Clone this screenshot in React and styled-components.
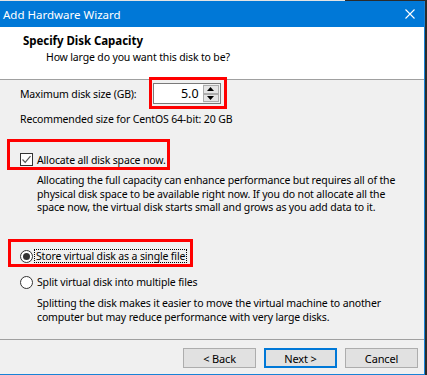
import React from 'react';
import styled, { createGlobalStyle } from 'styled-components';

const GlobalStyle = createGlobalStyle`
  html, body {
    margin: 0;
    padding: 0;
    background: #2b2b2b;
  }
  body {
    font-family: "Noto Sans", "Open Sans", "DejaVu Sans", sans-serif;
    font-size: 10.5px;
    letter-spacing: -0.15px;
    color: #000;
    white-space: nowrap;
  }
`;

const Screen = styled.div`
  width: 427px;
  height: 375px;
  display: flex;
  flex-direction: column;
  background: #2b2b2b;
  overflow: hidden;
`;

const TopStrip = styled.div`
  height: 1px;
  flex: none;
  background: linear-gradient(to right, #e3e3e3 0, #e3e3e3 345px, #2b2b2b 345px);
`;

const Window = styled.div`
  width: 424px;
  height: 373px;
  flex: none;
  display: flex;
  flex-direction: column;
  border-right: 1px solid #1883d7;
  border-bottom: 1px solid #1883d7;
  background: #f0f0f0;
`;

const TitleBar = styled.div`
  height: 26px;
  flex: none;
  display: flex;
  align-items: center;
  justify-content: space-between;
  background: #0078d7;
  color: #fff;
  padding: 0 9px 0 3px;
  font-size: 11.5px;
  letter-spacing: 0;
`;

const Header = styled.div`
  height: 53px;
  flex: none;
  background: #fff;
  border-bottom: 1px solid #a0a0a0;
  padding: 6px 0 0 23px;
  box-sizing: border-box;
`;

const HeaderTitle = styled.div`
  font-weight: 700;
  font-size: 11.5px;
  letter-spacing: -0.05px;
  line-height: 16px;
`;

const HeaderSub = styled.div`
  margin-left: 23px;
  line-height: 16px;
`;

const Body = styled.div`
  flex: 1;
  min-height: 0;
  display: flex;
  flex-direction: column;
  padding-left: 20px;
  padding-right: 8px;
`;

const SizeRow = styled.div`
  display: flex;
  align-items: center;
  margin-top: -3px;
  height: 32px;
`;

const Mark = styled.div`
  border: 3px solid #ff0000;
  box-sizing: border-box;
  display: flex;
  align-items: ${p => p.$align || 'center'};
`;

const SpinBox = styled.div`
  display: flex;
  border: 1px solid #7a7a7a;
  height: 21px;
  box-sizing: border-box;
  background: #fff;
`;

const SpinInput = styled.div`
  width: 49px;
  text-align: right;
  padding-right: 4px;
  box-sizing: border-box;
  line-height: 19px;
  font-size: 12.5px;
  letter-spacing: 0;
`;

const SpinButtons = styled.div`
  width: 17px;
  display: flex;
  flex-direction: column;
  background: #f0f0f0;
  padding: 1px 1px 1px 0;
  box-sizing: border-box;
`;

const SpinButton = styled.div`
  flex: 1;
  display: flex;
  align-items: center;
  justify-content: center;
  background: #e5e5e5;
  border: 1px solid #acacac;
`;

const Text = styled.div`
  line-height: ${p => p.$lh || 15}px;
  margin-top: ${p => p.$mt || 0}px;
  margin-left: ${p => p.$ml || 0}px;
`;

const Option = styled.label`
  display: flex;
  align-items: center;
  gap: 4px;
  height: 15px;
`;

const CheckBox = styled.span`
  width: 13px;
  height: 13px;
  box-sizing: border-box;
  border: 1px solid #333;
  background: #fff;
  display: flex;
  align-items: center;
  justify-content: center;
`;

const Radio = styled.span`
  width: 13px;
  height: 13px;
  box-sizing: border-box;
  border: 1px solid #333;
  border-radius: 50%;
  background: #fff;
  display: flex;
  align-items: center;
  justify-content: center;
  &::after {
    content: '';
    display: ${p => (p.$on ? 'block' : 'none')};
    width: 7px;
    height: 7px;
    border-radius: 50%;
    background: #333;
  }
`;

const Focus = styled.span`
  outline: 1px dotted #000;
  outline-offset: 0;
  margin-left: -2px;
  padding: 0 1px;
  line-height: 12px;
`;

const Footer = styled.div`
  height: 35px;
  flex: none;
  border-top: 1px solid #a0a0a0;
  display: flex;
  justify-content: flex-end;
  align-items: flex-start;
  gap: 8px;
  padding: 8px 6px 0 0;
  box-sizing: border-box;
`;

const Button = styled.div`
  width: 73px;
  height: 20px;
  box-sizing: border-box;
  background: #e1e1e1;
  border: ${p => (p.$default ? '2px solid #0078d7' : '1px solid #adadad')};
  display: flex;
  align-items: center;
  justify-content: center;
  font-size: 11px;
`;

const Arrow = ({ up }) => (
  <svg width="7" height="4" viewBox="0 0 7 4">
    <path d={up ? 'M0 4 L3.5 0 L7 4 Z' : 'M0 0 L3.5 4 L7 0 Z'} fill="#000" />
  </svg>
);

export default function App() {
  return (
    <Screen>
      <GlobalStyle />
      <TopStrip />
      <Window>
        <TitleBar>
          <span>Add Hardware Wizard</span>
          <svg width="10" height="10" viewBox="0 0 10 10">
            <path d="M0.5 0.5 L9.5 9.5 M9.5 0.5 L0.5 9.5" stroke="#fff" strokeWidth="1.1" />
          </svg>
        </TitleBar>
        <Header>
          <HeaderTitle>Specify Disk Capacity</HeaderTitle>
          <HeaderSub>How large do you want this disk to be?</HeaderSub>
        </Header>
        <Body>
          <SizeRow>
            <span style={{ paddingTop: 2 }}>Maximum disk size (GB):</span>
            <Mark style={{ marginLeft: 12, width: 78, height: 32, padding: '1px 0 0 1px', alignItems: 'center' }}>
              <SpinBox>
                <SpinInput>5.0</SpinInput>
                <SpinButtons>
                  <SpinButton><Arrow up /></SpinButton>
                  <SpinButton><Arrow /></SpinButton>
                </SpinButtons>
              </SpinBox>
            </Mark>
          </SizeRow>
          <Text $mt={3}>Recommended size for CentOS 64-bit: 20 GB</Text>
          <Mark $align="flex-end" style={{ marginLeft: -13, marginTop: 12, width: 163, height: 31, padding: '0 0 0 10px' }}>
            <Option>
              <CheckBox>
                <svg width="11" height="11" viewBox="0 0 11 11">
                  <path d="M1.5 5.5 L4.2 8.3 L9.5 2.2" fill="none" stroke="#555" strokeWidth="1.2" />
                </svg>
              </CheckBox>
              <span>Allocate all disk space now.</span>
            </Option>
          </Mark>
          <Text $lh={13.5} $ml={17} $mt={4}>
            Allocating the full capacity can enhance performance but requires all of the<br />
            physical disk space to be available right now. If you do not allocate all the<br />
            space now, the virtual disk starts small and grows as you add data to it.
          </Text>
          <Mark $align="flex-end" style={{ marginLeft: -12, marginTop: 24, width: 185, height: 28, padding: '0 0 0 9px' }}>
            <Option>
              <Radio $on />
              <Focus>Store virtual disk as a single file</Focus>
            </Option>
          </Mark>
          <Option style={{ marginTop: 8 }}>
            <Radio />
            <span>Split virtual disk into multiple files</span>
          </Option>
          <Text $lh={14} $ml={17} $mt={6}>
            Splitting the disk makes it easier to move the virtual machine to another<br />
            computer but may reduce performance with very large disks.
          </Text>
        </Body>
        <Footer>
          <Button>&lt; Back</Button>
          <Button $default>Next &gt;</Button>
          <Button>Cancel</Button>
        </Footer>
      </Window>
    </Screen>
  );
}
